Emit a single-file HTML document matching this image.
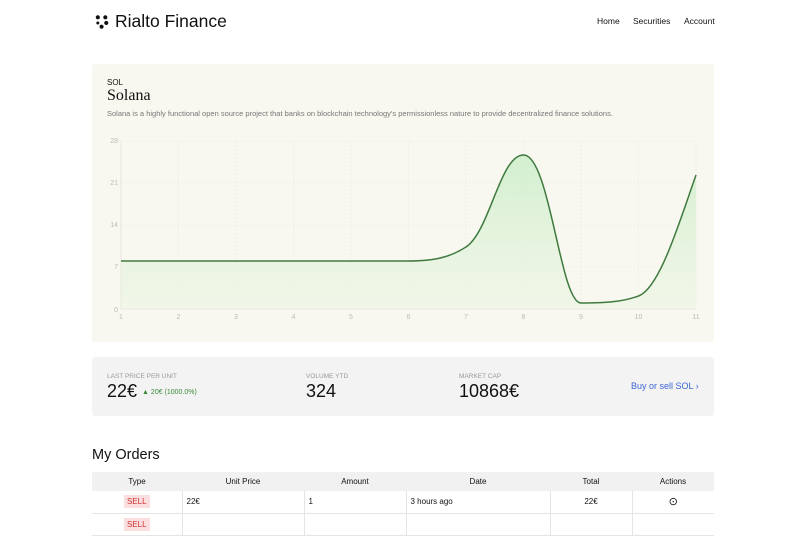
<!DOCTYPE html>
<html><head><meta charset="utf-8"><style>
*{margin:0;padding:0;box-sizing:border-box}
body{width:806px;height:520px;overflow:hidden;background:#fff;font-family:"Liberation Sans",sans-serif;color:#111;position:relative}
.logo{position:absolute;left:95px;top:11px;font-size:17.5px;display:flex;align-items:center}
.nav{position:absolute;top:16px;font-size:8.5px}
.card{position:absolute;left:92px;top:64px;width:622px;height:278px;background:#f8f7f0;border-radius:3px}
.stats{position:absolute;left:92px;top:357px;width:622px;height:59px;background:#f3f3f3;border-radius:3px}
.lbl{position:absolute;font-size:6.5px;color:#999;top:16px}
.val{position:absolute;font-size:18px;top:24px}
table{position:absolute;left:92px;top:472px;width:622px;border-collapse:collapse;font-size:8px}
th{background:#f1f1f1;font-weight:normal;height:19px;text-align:center}
td{height:22px;border-right:1px solid #e5e5e5;border-bottom:1px solid #e5e5e5;padding-left:4px}
</style></head><body>
<div class="logo"><svg width="15" height="16" viewBox="0 0 16 16" style="margin-right:5px"><circle cx="3" cy="3" r="2.2" fill="#111"/><circle cx="11" cy="3" r="2.2" fill="#111"/><circle cx="3" cy="9" r="1.6" fill="#111"/><circle cx="12" cy="9" r="2.2" fill="#111"/><circle cx="7" cy="13" r="2.2" fill="#111"/></svg>Rialto Finance</div>
<div class="nav" style="left:597px">Home</div>
<div class="nav" style="left:633px">Securities</div>
<div class="nav" style="left:684px">Account</div>
<div class="card">
<div style="position:absolute;left:15px;top:14px;font-size:8px">SOL</div>
<div style="position:absolute;left:15px;top:23px;font-size:16px;font-family:'Liberation Serif',serif">Solana</div>
<div style="position:absolute;left:15px;top:45px;font-size:7.5px;color:#777">Solana is a highly functional open source project that banks on blockchain technology's permissionless nature to provide decentralized finance solutions.</div>
</div>
<svg style="position:absolute;left:0;top:0" width="806" height="340">
<defs><linearGradient id="g" x1="0" y1="0" x2="0" y2="1"><stop offset="0" stop-color="#cdeecb" stop-opacity=".9"/><stop offset="1" stop-color="#eaf5e0" stop-opacity=".5"/></linearGradient></defs>
<g stroke="#ebe9df" stroke-width="0.6" stroke-dasharray="2 2">
<line x1="121" y1="141" x2="696" y2="141"/><line x1="121" y1="183" x2="696" y2="183"/><line x1="121" y1="225" x2="696" y2="225"/><line x1="121" y1="267" x2="696" y2="267"/>
<line x1="178.5" y1="141" x2="178.5" y2="309"/><line x1="236" y1="141" x2="236" y2="309"/><line x1="293.5" y1="141" x2="293.5" y2="309"/><line x1="351" y1="141" x2="351" y2="309"/><line x1="408.5" y1="141" x2="408.5" y2="309"/><line x1="466" y1="141" x2="466" y2="309"/><line x1="523.5" y1="141" x2="523.5" y2="309"/><line x1="581" y1="141" x2="581" y2="309"/><line x1="638.5" y1="141" x2="638.5" y2="309"/><line x1="696" y1="141" x2="696" y2="309"/>
</g>
<line x1="121" y1="141" x2="121" y2="309" stroke="#e2e0d6" stroke-width=".7"/>
<line x1="121" y1="309" x2="696" y2="309" stroke="#e2e0d6" stroke-width=".7"/>
<path d="M121 261 L408.5 261 C437 261 452 256 466 247 C490 231 500 155 523.5 155 C550 155 560 303 581 303 C610 303 625 301 638.5 296 C660 288 680 220 696 175 L696 309 L121 309Z" fill="url(#g)"/>
<path d="M121 261 L408.5 261 C437 261 452 256 466 247 C490 231 500 155 523.5 155 C550 155 560 303 581 303 C610 303 625 301 638.5 296 C660 288 680 220 696 175" fill="none" stroke="#3f7a3f" stroke-width="1.5"/>
<g font-size="7" fill="#bbb" font-family="Liberation Sans" text-anchor="end">
<text x="118" y="143">28</text><text x="118" y="185">21</text><text x="118" y="227">14</text><text x="118" y="269">7</text><text x="118" y="312">0</text></g>
<g font-size="7" fill="#bbb" font-family="Liberation Sans" text-anchor="middle">
<text x="121" y="319">1</text><text x="178.5" y="319">2</text><text x="236" y="319">3</text><text x="293.5" y="319">4</text><text x="351" y="319">5</text><text x="408.5" y="319">6</text><text x="466" y="319">7</text><text x="523.5" y="319">8</text><text x="581" y="319">9</text><text x="638.5" y="319">10</text><text x="696" y="319">11</text></g>
</svg>
<div class="stats">
<div class="lbl" style="left:15px">LAST PRICE PER UNIT</div>
<div class="val" style="left:15px">22€ <span style="font-size:7px;color:#3a8a3a;vertical-align:middle">▲ 20€ (1000.0%)</span></div>
<div class="lbl" style="left:214px">VOLUME YTD</div>
<div class="val" style="left:214px">324</div>
<div class="lbl" style="left:367px">MARKET CAP</div>
<div class="val" style="left:367px">10868€</div>
<div style="position:absolute;left:539px;top:24px;font-size:9px;color:#3b66d6">Buy or sell SOL ›</div>
</div>
<div style="position:absolute;left:92px;top:447px;font-size:14.5px">My Orders</div>
<table>
<tr><th style="width:90px">Type</th><th style="width:122px">Unit Price</th><th style="width:102px">Amount</th><th style="width:144px">Date</th><th style="width:82px">Total</th><th>Actions</th></tr>
<tr><td style="text-align:center;padding:0"><span style="background:#fbdede;color:#c33;padding:2px 3px">SELL</span></td><td>22€</td><td>1</td><td>3 hours ago</td><td style="text-align:center;padding:0">22€</td><td style="text-align:center;padding:0;border-right:0;font-size:11px">⊙</td></tr>
<tr><td style="text-align:center;padding:0"><span style="background:#fbdede;color:#c33;padding:2px 3px">SELL</span></td><td></td><td></td><td></td><td></td><td style="border-right:0"></td></tr>
</table>
</body></html>
